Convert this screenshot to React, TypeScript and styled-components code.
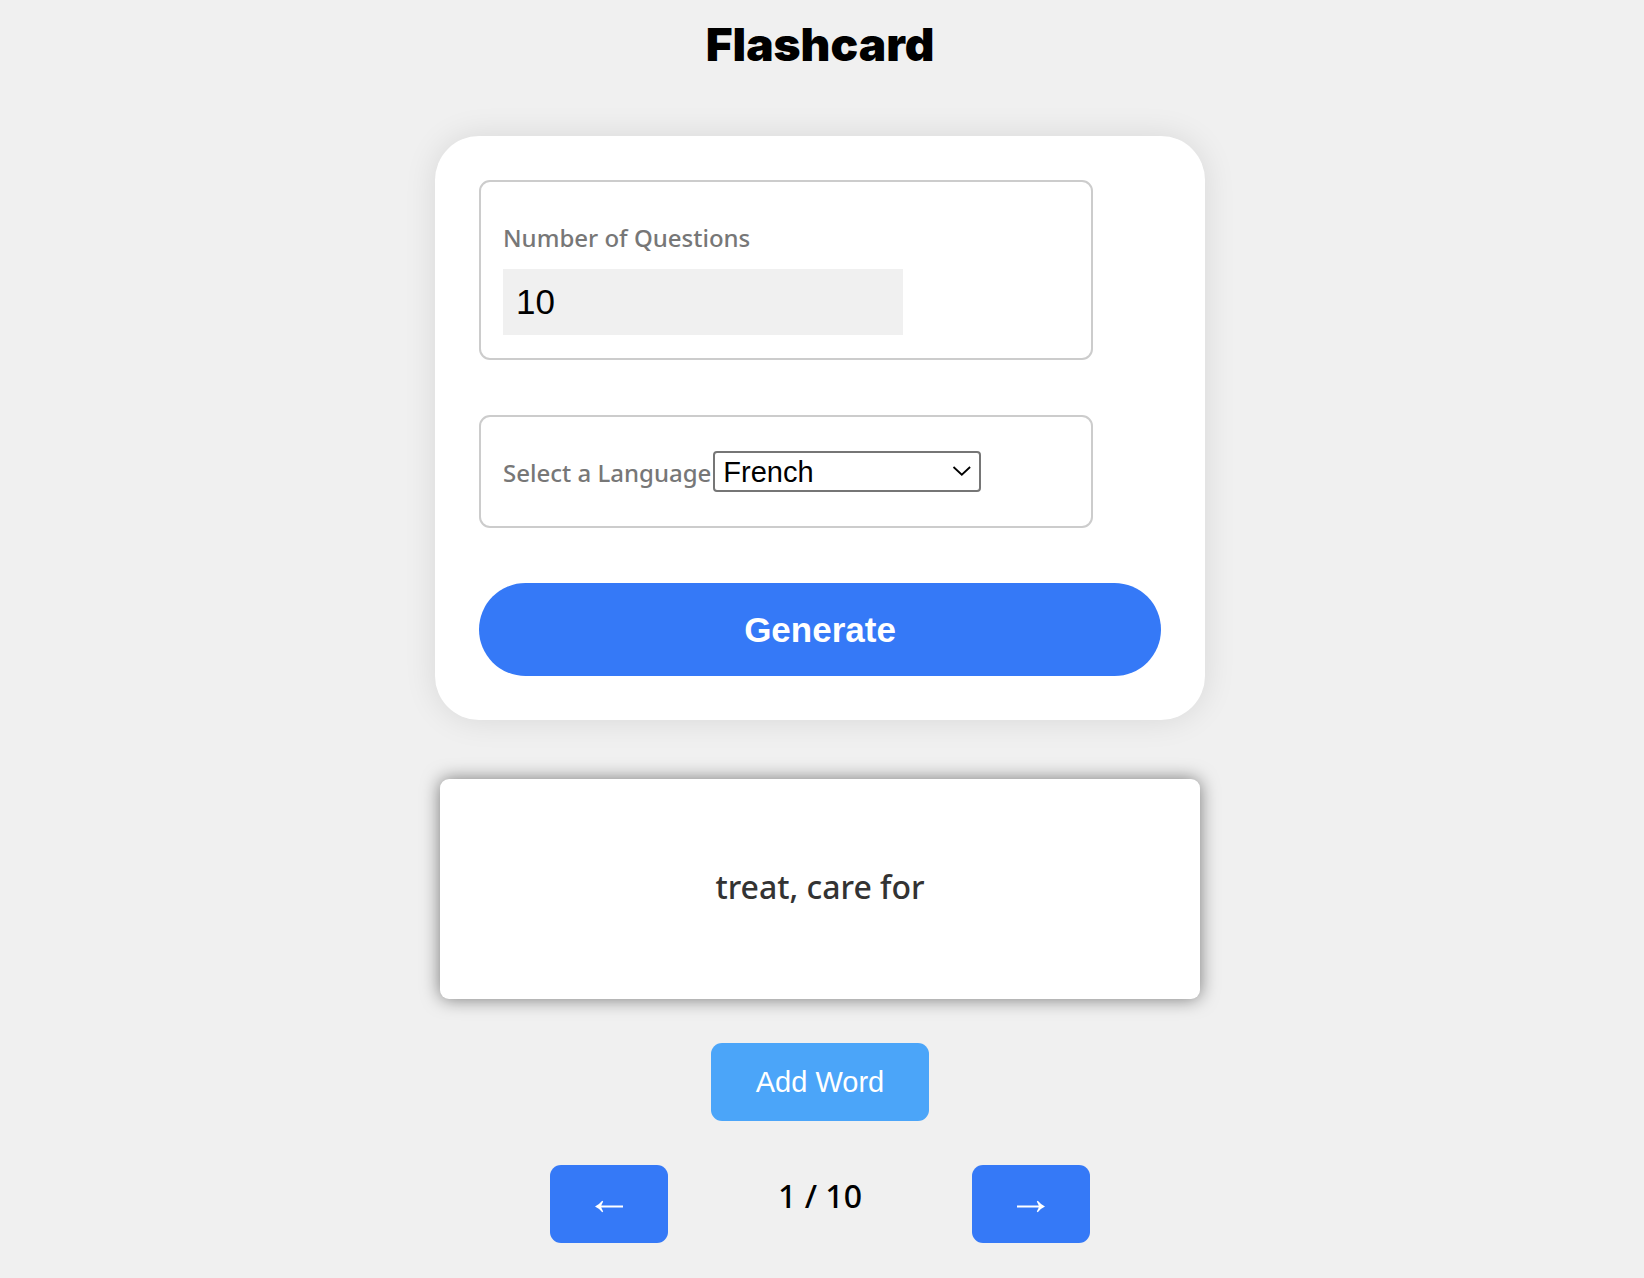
import React, { useState } from "react";
import styled, { createGlobalStyle } from "styled-components";

const display = `"Noto Sans", "Open Sans", sans-serif`;
const control = `"Liberation Sans", Arial, sans-serif`;

const GlobalStyle = createGlobalStyle`
  *, *::before, *::after { box-sizing: border-box; }
  body {
    margin: 0;
    background: #f0f0f0;
    color: #000;
    font-family: ${display};
  }
`;

const Page = styled.main`
  display: flex;
  flex-direction: column;
  align-items: center;
  padding: 16px 4px 34px 0;
`;

const Title = styled.h1`
  margin: 0 0 64px;
  font-family: Inter, sans-serif;
  font-size: 46px;
  font-weight: 900;
  line-height: 56px;
`;

const Settings = styled.form`
  display: flex;
  flex-direction: column;
  gap: 55px;
  width: 100%;
  max-width: 770px;
  padding: 44px;
  border-radius: 44px;
  background: #fff;
  box-shadow: 0 0 32px rgba(0, 0, 0, 0.1);
`;

const Field = styled.div<{ $inline?: boolean }>`
  display: flex;
  flex-direction: ${(p) => (p.$inline ? "row" : "column")};
  align-items: ${(p) => (p.$inline ? "center" : "flex-start")};
  gap: ${(p) => (p.$inline ? "2px" : "0")};
  width: 90%;
  padding: 22px;
  border: 2px solid #ccc;
  border-radius: 11px;
`;

const Label = styled.label`
  padding: 18px 0 15px;
  color: #777;
  font-size: 24px;
  font-weight: 500;
  line-height: 32px;
  white-space: nowrap;
`;

const NumberInput = styled.input`
  width: 400px;
  max-width: 100%;
  height: 66px;
  margin: 0 0 1px;
  padding: 0 13px;
  border: 0;
  border-radius: 0;
  background: #f0f0f0;
  color: #000;
  font-family: ${control};
  font-size: 35px;
`;

const SelectWrap = styled.div`
  position: relative;
  width: 268px;
`;

const Select = styled.select`
  display: block;
  width: 100%;
  height: 41px;
  padding: 0 36px 0 8px;
  appearance: none;
  border: 2px solid #767676;
  border-radius: 4px;
  background: #fff;
  color: #000;
  font-family: ${control};
  font-size: 29px;
  line-height: 36px;
`;

const Chevron = styled.svg`
  position: absolute;
  top: 14px;
  right: 9px;
  pointer-events: none;
`;

const GenerateButton = styled.button`
  height: 93px;
  border: 0;
  border-radius: 47px;
  background: #3579f7;
  color: #fff;
  font-family: ${control};
  font-size: 35px;
  font-weight: 700;
`;

const Flashcard = styled.section`
  display: flex;
  align-items: center;
  justify-content: center;
  width: 100%;
  max-width: 760px;
  min-height: 220px;
  margin-top: 59px;
  padding-bottom: 4px;
  border-radius: 9px;
  background: #fff;
  box-shadow: 0 0 18px rgba(0, 0, 0, 0.5);
  color: #333;
  font-size: 32px;
  font-weight: 500;
  line-height: 44px;
`;

const ActionButton = styled.button<{ $tone: string }>`
  height: 78px;
  padding: 0 45px;
  border: 0;
  border-radius: 11px;
  background: ${(p) => p.$tone};
  color: #fff;
  font-family: ${control};
  font-size: 29px;
`;

const ArrowIcon = styled.svg`
  display: block;
`;

const AddRow = styled.div`
  margin: 44px 0;
`;

const Pager = styled.nav`
  display: flex;
  justify-content: space-between;
  width: 100%;
  max-width: 540px;
`;

const Position = styled.span`
  padding-top: 9px;
  font-size: 32px;
  font-weight: 500;
  line-height: 44px;
`;

function Arrow({ direction }: { direction: "left" | "right" }) {
  return (
    <ArrowIcon width="28" height="18" viewBox="0 0 28 18" aria-hidden="true">
      <g transform={direction === "right" ? "translate(28 0) scale(-1 1)" : undefined}>
        <path d="M28 10.4H6.2L8.2 6.6 7.2 5.8Q4.2 9.6 0 11.5q4.200 1.900 7.200 5.700l1-.8-2-3.800H28z" fill="#fff" />
      </g>
    </ArrowIcon>
  );
}

export default function App() {
  const [count, setCount] = useState("10");
  const [language, setLanguage] = useState("French");
  const [index, setIndex] = useState(1);
  const total = 10;

  return (
    <>
      <GlobalStyle />
      <Page>
        <Title>Flashcard</Title>
        <Settings onSubmit={(e) => e.preventDefault()}>
          <Field>
            <Label htmlFor="count">Number of Questions</Label>
            <NumberInput
              id="count"
              type="number"
              value={count}
              onChange={(e) => setCount(e.target.value)}
            />
          </Field>
          <Field $inline>
            <Label htmlFor="language">Select a Language</Label>
            <SelectWrap>
              <Select
                id="language"
                value={language}
                onChange={(e) => setLanguage(e.target.value)}
              >
                <option>French</option>
                <option>Spanish</option>
                <option>German</option>
              </Select>
              <Chevron width="20" height="12" viewBox="0 0 20 12" aria-hidden="true">
                <path d="M1.500 2 9.800 9.700 18.100 2" fill="none" stroke="#000" strokeWidth="1.8" />
              </Chevron>
            </SelectWrap>
          </Field>
          <GenerateButton type="submit">Generate</GenerateButton>
        </Settings>
        <Flashcard>treat, care for</Flashcard>
        <AddRow>
          <ActionButton type="button" $tone="#4ba5f9">Add Word</ActionButton>
        </AddRow>
        <Pager>
          <ActionButton
            type="button"
            $tone="#3579f7"
            aria-label="Previous card"
            onClick={() => setIndex(Math.max(1, index - 1))}
          >
            <Arrow direction="left" />
          </ActionButton>
          <Position>{index} / {total}</Position>
          <ActionButton
            type="button"
            $tone="#3579f7"
            aria-label="Next card"
            onClick={() => setIndex(Math.min(total, index + 1))}
          >
            <Arrow direction="right" />
          </ActionButton>
        </Pager>
      </Page>
    </>
  );
}
